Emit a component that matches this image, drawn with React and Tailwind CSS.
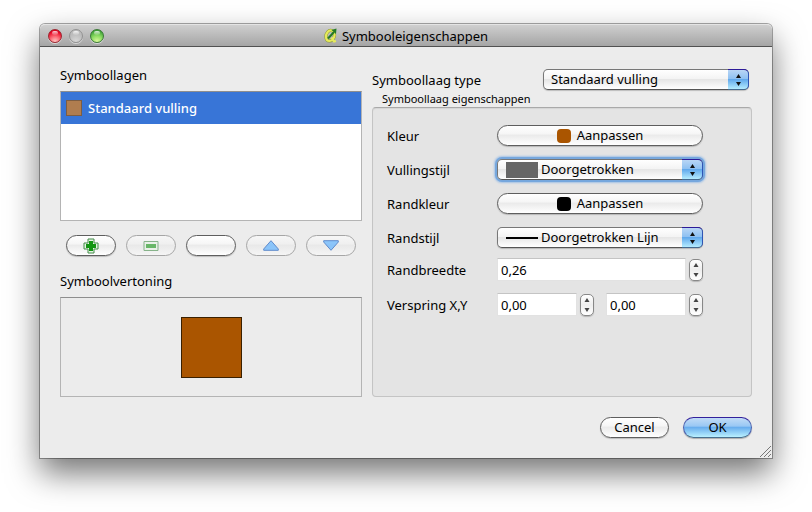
import React, { useState } from "react";

function Triangles({ gap = 4, color = "#111" }) {
  return (
    <svg width="7" height={8 + gap} viewBox={`0 0 7 ${8 + gap}`} fill={color} aria-hidden="true">
      <path d="M3.5 0L6 4H1z" />
      <path d={`M3.5 ${8 + gap}L6 ${4 + gap}H1z`} />
    </svg>
  );
}

function Popup({ id, label, options, mark, focused }) {
  const ring = focused ? "shadow-[0_0_0_2px_#76a7dd,0_0_2px_3px_#a3c2e6]" : "shadow-[0_1px_1px_#0003]";
  const pad = mark ? "pl-[43px]" : "pl-[7px]";
  return (
    <div className={`relative h-[21px] w-full rounded-[5px] ${ring}`}>
      <select
        id={id}
        aria-label={label}
        className={`block h-[21px] w-full appearance-none rounded-[5px] border border-[#777] border-b-[#555] bg-[linear-gradient(#fff,#f4f4f4_45%,#e6e6e6_50%,#fff)] pr-6 text-[13px] leading-[19px] outline-none ${pad}`}
      >
        {options.map((o) => (
          <option key={o}>{o}</option>
        ))}
      </select>
      {mark && <span className="pointer-events-none absolute inset-y-0 left-[9px] flex items-center">{mark}</span>}
      <span className="pointer-events-none absolute inset-y-0 right-0 flex w-[21px] items-center justify-center rounded-r-[5px] border border-l-0 border-t-[#2c1a99] border-r-[#2f55b5] border-b-[#456a90] bg-[linear-gradient(#b9d6f5,#8fc1f2_45%,#62a9ec_50%,#b4ecff)]">
        <Triangles />
      </span>
    </div>
  );
}

function PushButton({ children, className = "", ...rest }) {
  return (
    <button
      type="button"
      className={`flex h-[21px] items-center justify-center rounded-full border border-[#5e5e5e] bg-[linear-gradient(#fff,#f6f6f6_40%,#ebebeb_50%,#fff)] text-[13px] leading-[19px] shadow-[0_1px_1px_#0003] disabled:border-[#a6a6a6] disabled:bg-[linear-gradient(#f6f6f6,#f0f0f0_40%,#e9e9e9_50%,#f5f5f5)] disabled:shadow-none ${className}`}
      {...rest}
    >
      {children}
    </button>
  );
}

function Spin({ label, id, initial }) {
  const [value, setValue] = useState(initial);
  const step = (d) => setValue((Math.max(0, parseFloat(value.replace(",", ".")) + d)).toFixed(2).replace(".", ","));
  return (
    <div className="flex min-w-0 flex-1 items-center gap-[3px]">
      <input
        id={id}
        aria-label={label}
        value={value}
        onChange={(e) => setValue(e.target.value)}
        className="h-[23px] w-full min-w-0 flex-1 border border-[#e2e2e2] border-t-[#c4c4c4] bg-white px-[3px] text-[13px] outline-none"
      />
      <div className="flex h-[22px] w-[14px] flex-col rounded-[5px] border border-[#888] bg-[linear-gradient(#fff,#eee_50%,#fff)] shadow-[0_1px_1px_#0003]">
        <button type="button" aria-label={`${label} omhoog`} onClick={() => step(0.01)} className="flex flex-1 items-center justify-center">
          <svg width="6" height="4" viewBox="0 0 6 4" fill="#444"><path d="M3 0L5.500 4h-5z" /></svg>
        </button>
        <button type="button" aria-label={`${label} omlaag`} onClick={() => step(-0.01)} className="flex flex-1 items-center justify-center">
          <svg width="6" height="4" viewBox="0 0 6 4" fill="#444"><path d="M3 4L5.500 0h-5z" /></svg>
        </button>
      </div>
    </div>
  );
}

function Row({ label, id, children }) {
  return (
    <div className="flex h-[21px] items-center">
      <label htmlFor={id} className="w-[110px] shrink-0">{label}</label>
      <div className="flex min-w-0 flex-1">{children}</div>
    </div>
  );
}

function Light({ className, label }) {
  return (
    <button type="button" aria-label={label} className={`relative size-[14px] rounded-full border shadow-[0_1px_0_#fff8] ${className}`}>
      <span className="absolute inset-x-[3px] top-px h-1 rounded-full bg-linear-to-b from-white/80 to-white/10" />
    </button>
  );
}

export default function App() {
  return (
    <main className="min-h-screen bg-white px-10 pt-6 pb-[54px] font-['Noto_Sans','Open_Sans',sans-serif] text-[13px] leading-5 text-black">
      <section className="relative rounded-t-[5px] bg-[#ececec] shadow-[0_0_0_1px_#0005,0_15px_32px_#0000008c]">
        <header className="flex h-[23px] items-center rounded-t-[5px] border-t border-b border-t-[#e4e4e4] border-b-[#515151] bg-linear-to-b from-[#cfcfcf] to-[#a5a5a5] px-2">
          <div className="flex flex-1 gap-[7px]">
            <Light label="Sluiten" className="border-[#9c2630] bg-[radial-gradient(circle_at_50%_95%,#ffc8c4,#fb6672_40%,#e5001f_78%)]" />
            <Light label="Minimaliseren" className="border-[#929292] bg-[radial-gradient(circle_at_50%_95%,#d8d8d8,#bcbcbc_60%)]" />
            <Light label="Zoomen" className="border-[#3b7a36] bg-[radial-gradient(circle_at_50%_95%,#dcfb9c,#8bdb62_45%,#3fa237_82%)]" />
          </div>
          <h1 className="flex items-center gap-1">
            <svg width="14" height="15" viewBox="0 0 14 15" aria-hidden="true">
              <path d="M7.500 2.500C4.500 2 2 5 2 8.500c0 3 1.500 4.500 3.500 4.500S10 11 10.500 7.500c.3-2-.7-4.500-3-5z" fill="none" stroke="#8c9a30" strokeWidth="3.200" />
              <path d="M7.500 2.500C4.500 2 2 5 2 8.500c0 3 1.500 4.500 3.500 4.500S10 11 10.500 7.500c.3-2-.7-4.500-3-5zM7.500 9.500l2.500 4 2-.5" fill="none" stroke="#e6ea5c" strokeWidth="2.200" />
              <path d="M4 10.500L10 4" stroke="#247a25" strokeWidth="2" />
              <path d="M7.500 2L12.500.5 12 6z" fill="#247a25" />
            </svg>
            Symbooleigenschappen
          </h1>
          <div className="flex-1" />
        </header>

        <div className="grid grid-cols-[302fr_380fr] gap-x-[10px] px-5 pt-[18px]">
          <div>
            <h2>Symboollagen</h2>
            <ul className="mt-[6px] h-[130px] border border-[#b4b4b4] border-t-[#8e8e8e] bg-white">
              <li className="flex h-8 items-center gap-[6px] bg-[#3875d7] px-[5px] font-medium text-white">
                <span className="size-4 border border-[#7c5d43] bg-[#b07d4f]" />
                Standaard vulling
              </li>
            </ul>
            <div className="mt-[14px] flex justify-center gap-[10px] px-[5px]">
              <PushButton aria-label="Laag toevoegen" className="max-w-[50px] flex-1">
                <svg width="16" height="16" viewBox="0 0 16 16"><path d="M5 1h6v4h4v6h-4v4H5v-4H1V5h4z" fill="#e6f3e4" stroke="#438c48" strokeLinejoin="round" /><path d="M6 3h4v3h3v4h-3v3H6v-3H3V6h3z" fill="#129512" /></svg>
              </PushButton>
              <PushButton aria-label="Laag verwijderen" disabled className="max-w-[50px] flex-1">
                <svg className="opacity-60" width="16" height="10" viewBox="0 0 16 10"><path d="M1 .5h14v9H1z" fill="#e6f3e4" stroke="#438c48" /><path d="M3 3h10v4H3z" fill="#129512" /></svg>
              </PushButton>
              <PushButton aria-label="Vergrendelen" className="max-w-[50px] flex-1" />
              <PushButton aria-label="Omhoog" disabled className="max-w-[50px] flex-1">
                <svg className="opacity-70" width="16" height="11" viewBox="0 0 16 11"><path d="M8 .7L15.300 9v1.300H.7V9z" fill="#62b4ff" stroke="#2361bd" strokeLinejoin="round" /></svg>
              </PushButton>
              <PushButton aria-label="Omlaag" disabled className="max-w-[50px] flex-1">
                <svg className="opacity-70" width="16" height="11" viewBox="0 0 16 11"><path d="M8 10.300L15.300 2V.7H.7V2z" fill="#62b4ff" stroke="#2361bd" strokeLinejoin="round" /></svg>
              </PushButton>
            </div>
            <h2 className="mt-[15px]">Symboolvertoning</h2>
            <div className="mt-[6px] flex h-[100px] items-center justify-center border border-[#b4b4b4] border-t-[#8e8e8e]">
              <span className="size-[61px] border border-[#3a2000] bg-[#aa5500]" />
            </div>
          </div>

          <div className="flex flex-col pt-1">
            <div className="flex items-center pr-[3px]">
              <label htmlFor="type" className="w-[171px] shrink-0">Symboollaag type</label>
              <Popup id="type" label="Symboollaag type" options={["Standaard vulling"]} />
            </div>
            <fieldset className="flex flex-1 flex-col">
              <legend className="px-[10px] pt-px text-[11px] leading-4">Symboollaag eigenschappen</legend>
              <div className="flex flex-1 flex-col rounded-[4px] border border-[#c4c4c4] border-t-[#a9a9a9] bg-[#e4e4e4] pt-[17px] pr-12 pl-[14px] shadow-[inset_0_1px_1px_#0001]">
                <div className="flex flex-col gap-[13px]">
                  <Row label="Kleur" id="kleur">
                    <PushButton id="kleur" className="flex-1 gap-[6px]"><span className="size-[14px] rounded-[4px] bg-[#aa5500]" />Aanpassen</PushButton>
                  </Row>
                  <Row label="Vullingstijl" id="vul">
                    <Popup id="vul" label="Vullingstijl" focused options={["Doorgetrokken"]} mark={<span className="h-4 w-8 bg-[#666]" />} />
                  </Row>
                  <Row label="Randkleur" id="randkleur">
                    <PushButton id="randkleur" className="flex-1 gap-[6px]"><span className="size-[14px] rounded-[4px] bg-black" />Aanpassen</PushButton>
                  </Row>
                  <Row label="Randstijl" id="stijl">
                    <Popup id="stijl" label="Randstijl" options={["Doorgetrokken Lijn"]} mark={<span className="h-[2px] w-8 bg-black" />} />
                  </Row>
                </div>
                <div className="mt-[11px] flex flex-col gap-[14px]">
                  <Row label="Randbreedte" id="breedte">
                    <Spin id="breedte" label="Randbreedte" initial="0,26" />
                  </Row>
                  <Row label="Verspring X,Y" id="x">
                    <div className="flex flex-1 gap-3"><Spin id="x" label="Verspring X" initial="0,00" /><Spin id="y" label="Verspring Y" initial="0,00" /></div>
                  </Row>
                </div>
              </div>
            </fieldset>
          </div>
        </div>

        <footer className="flex justify-end gap-[14px] px-5 pt-5 pb-5">
          <PushButton className="w-[69px]">Cancel</PushButton>
          <button type="button" className="h-[21px] w-[69px] rounded-full border border-[#4a5fae] border-t-[#33209c] border-b-[#48708f] bg-[linear-gradient(#c1dbf6,#9ac8f4_42%,#69aeee_50%,#b9f0ff)] text-[13px] leading-[19px] shadow-[0_1px_1px_#0004]">OK</button>
        </footer>
        <svg className="absolute right-px bottom-px" width="11" height="11" viewBox="0 0 11 11" stroke="#777" aria-hidden="true"><path d="M0 11L11 0M4 11l7-7M8 11l3-3" /></svg>
      </section>
    </main>
  );
}
